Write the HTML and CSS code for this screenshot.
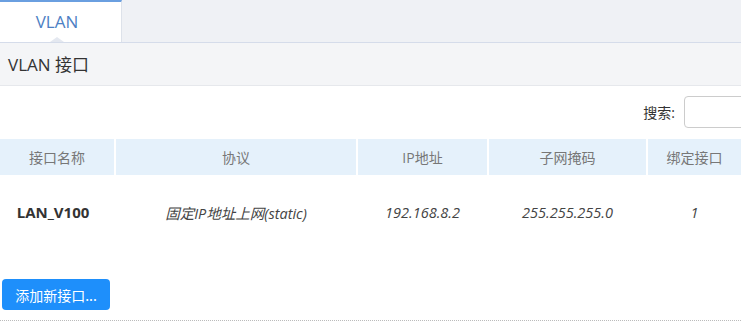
FILE: index.html
```html
<!DOCTYPE html>
<html lang="zh-CN">
<head>
  <meta charset="UTF-8" />
  <title>VLAN</title>
  <link rel="stylesheet" href="styles.css">
</head>
<body>
  <div class="tabs">
    <div class="tab active">VLAN</div>
  </div>

  <div class="section-title">VLAN 接口</div>

  <div class="toolbar">
    <label for="search">搜索:</label>
    <input type="text" id="search" />
  </div>

  <table class="grid">
    <thead>
      <tr>
        <th class="c-name">接口名称</th>
        <th class="c-proto">协议</th>
        <th class="c-ip">IP地址</th>
        <th class="c-mask">子网掩码</th>
        <th class="c-bind">绑定接口</th>
      </tr>
    </thead>
    <tbody>
      <tr>
        <td class="name">LAN_V100</td>
        <td>固定IP地址上网(static)</td>
        <td>192.168.8.2</td>
        <td>255.255.255.0</td>
        <td>1</td>
      </tr>
    </tbody>
  </table>

  <div class="actions">
    <button>添加新接口...</button>
  </div>
</body>
</html>
```

FILE: styles.css
```css
body {
  margin: 0;
  font-family: "Open Sans", "Noto Sans CJK SC", sans-serif;
  background: #fff;
  color: #333;
  overflow: hidden;
}

.tabs {
  height: 42px;
  background: #eff1f5;
  border-bottom: 1px solid #d5dcea;
  display: flex;
}

.tab {
  width: 114px;
  height: 40px;
  padding-right: 7px;
  border-top: 2px solid #6a9fe0;
  border-right: 1px solid #dde2ea;
  background: #fff;
  color: #4d7fc4;
  font-size: 17px;
  line-height: 40px;
  text-align: center;
  position: relative;
}

.tab.active::after {
  content: "";
  position: absolute;
  left: 50px;
  bottom: 0;
  border-left: 7px solid transparent;
  border-right: 7px solid transparent;
  border-bottom: 5px solid #e4e8f0;
}

.section-title {
  height: 42px;
  line-height: 44px;
  padding-left: 8px;
  background: #f4f5f7;
  border-bottom: 1px solid #e6e8ec;
  font-size: 17px;
  color: #333;
}

.toolbar {
  display: flex;
  justify-content: flex-end;
  align-items: center;
  gap: 9px;
  padding: 10px 0 11px;
  margin-right: -13px;
}

.toolbar label {
  font-size: 14px;
  color: #333;
}

.toolbar input {
  width: 70px;
  height: 32px;
  border: 1px solid #ccc;
  border-radius: 4px;
  padding: 0;
  box-sizing: border-box;
}

.grid {
  width: 745px;
  border-collapse: separate;
  border-spacing: 2px 0;
  margin-left: -2px;
}

.grid th {
  height: 36px;
  background: #e5f1fb;
  color: #777;
  font-weight: normal;
  font-size: 14px;
  padding: 0;
}

.c-name { width: 114px; }
.c-proto { width: 240px; }
.c-ip { width: 129px; }
.c-mask { width: 157px; }

.grid td {
  height: 74px;
  text-align: center;
  font-size: 14.5px;
  font-style: italic;
  color: #444;
  padding: 0;
}

.grid td.name {
  font-style: normal;
  font-weight: bold;
  font-size: 15px;
  color: #333;
  padding-right: 8px;
}

.actions {
  padding: 30px 2px 10px;
  border-bottom: 1px dotted #bbb;
}

.actions button {
  background: #1e8ffb;
  color: #fff;
  border: none;
  border-radius: 4px;
  width: 108px;
  height: 31px;
  font-size: 14px;
  font-family: "Noto Sans CJK SC", sans-serif;
  padding: 0;
}
```
